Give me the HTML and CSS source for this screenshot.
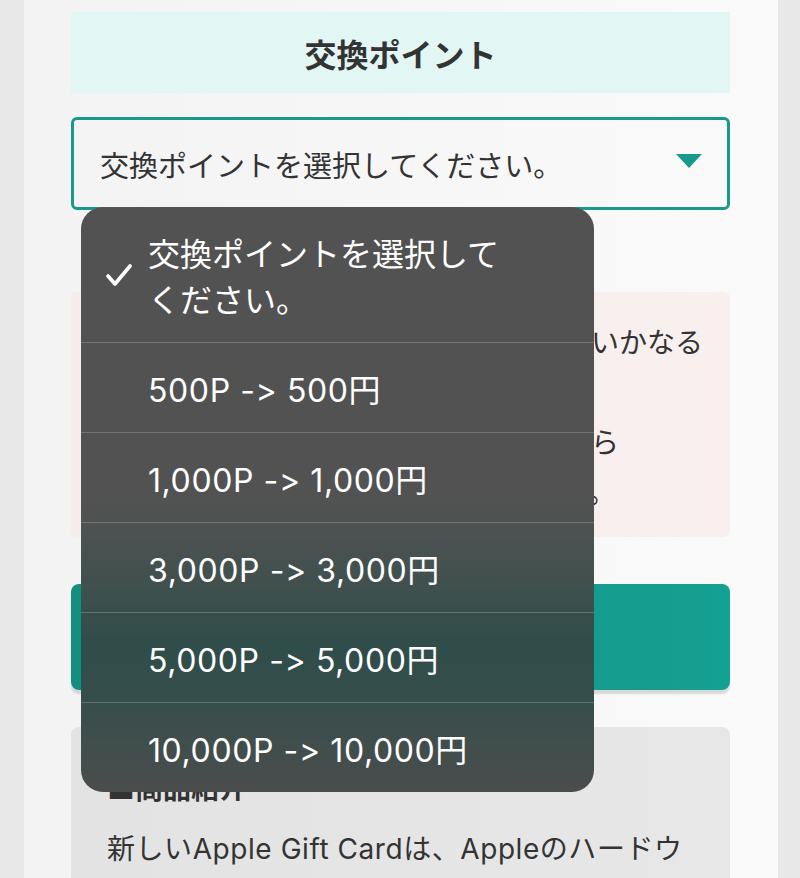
FILE: index.html
```html
<!DOCTYPE html>
<html lang="ja">
<head>
    <meta charset="UTF-8">
    <title>交換ポイント</title>
    <link rel="stylesheet" href="styles.css">
</head>
<body>
<div class="page">
    <!-- 타이틀 -->
    <div class="ttl">
        <h2>交換ポイント</h2>
    </div>

    <!-- 셀렉트 박스 + 열린 목록 -->
    <div class="sel-wrap">
        <div class="sel">
            <span>交換ポイントを選択してください。</span>
            <i class="sel-arrow"></i>
        </div>

        <ul class="picker">
            <li class="picker-item first">
                <svg class="check" width="26" height="22" viewBox="0 0 26 22">
                    <polyline points="2,12 9,20 24,2" fill="none" stroke="#fff" stroke-width="3.6" stroke-linecap="round" stroke-linejoin="round"/>
                </svg>
                <span class="first-txt">交換ポイントを選択してください。</span>
            </li>
            <li class="picker-item">500P -&gt; 500円</li>
            <li class="picker-item">1,000P -&gt; 1,000円</li>
            <li class="picker-item">3,000P -&gt; 3,000円</li>
            <li class="picker-item">5,000P -&gt; 5,000円</li>
            <li class="picker-item">10,000P -&gt; 10,000円</li>
        </ul>
    </div>

    <!-- 주의사항 -->
    <div class="notice">
        ※ポイント交換申請後のキャンセルはいかなる<br>
        理由でも受け付けておりません。<br>
        ギフトコードは交換完了後のメールから<br>
        またはマイページでもご確認できます。
    </div>

    <!-- 교환 버튼 -->
    <button class="btn-exch" type="button">交換する</button>

    <!-- 상품소개 -->
    <div class="info">
        <h3>■商品紹介</h3>
        <p>新しいApple Gift Cardは、Appleのハードウェア、アクセサリ、アプリ、ゲーム、音楽などに使えます。</p>
    </div>
</div>
</body>
</html>
```

FILE: styles.css
```css
*{
    margin: 0;
    padding: 0;
    box-sizing: border-box;
}
body{
    background-color: #e8e8e8;
    font-family: "Noto Sans CJK JP", sans-serif;
    color: #333;
}
/* 가운데 컬럼 */
.page{
    width: 754px;
    min-height: 878px;
    margin-left: 24px;
    padding: 12px 48px 0 47px;
    background: linear-gradient(to right, #f3f3f3, #fafafa);
    overflow: hidden;
}
/* 타이틀 박스 */
.ttl{
    height: 81px;
    background-color: #e2f6f4;
    display: flex;
    align-items: center;
    justify-content: center;
}
.ttl h2{
    font-size: 32px;
    font-weight: bold;
    color: #333;
}

/* 셀렉트 */
.sel-wrap{
    position: relative;
    margin-top: 24px;
}
.sel{
    height: 93px;
    border: 3px solid #17998b;
    border-radius: 6px;
    padding: 0 25px 0 26px;
    display: flex;
    align-items: center;
    justify-content: space-between;
    font-size: 29px;
    color: #333;
}
/* 역삼각형 */
.sel-arrow{
    width: 0;
    height: 0;
    border-left: 13px solid transparent;
    border-right: 13px solid transparent;
    border-top: 14px solid #17998b;
    margin-top: -6px;
}

/* 열린 목록(아이폰 피커) */
.picker{
    position: absolute;
    top: 90px;
    left: 10px;
    width: 513px;
    z-index: 10;
    list-style: none;
    border-radius: 22px;
    overflow: hidden;
    background: linear-gradient(to bottom,
        #525252 0,
        #525252 290px,
        #4b5251 330px,
        #3e504d 385px,
        #2f4d4a 440px,
        #364e4b 490px,
        #404e4c 535px,
        #4a4d4c 585px);
    font-family: "Inter", "Noto Sans CJK JP", sans-serif;
    font-feature-settings: "calt" 0;
    font-size: 32px;
    color: #fff;
}
.picker-item{
    height: 90px;
    padding-left: 67px;
    display: flex;
    align-items: center;
    border-top: 1px solid rgba(255,255,255,0.2);
    letter-spacing: 0.6px;
}
.picker-item.first{
    height: 135px;
    border-top: 0;
    padding-left: 25px;
    line-height: 46px;
    letter-spacing: 0;
    font-family: "Noto Sans CJK JP", sans-serif;
}
.check{
    flex-shrink: 0;
    margin-right: 16px;
}
.first-txt{
    width: 370px;
}

/* 주의사항 박스 */
.notice{
    margin-top: 82px;
    background: linear-gradient(to right, #f6ecea, #f8f0ef);
    border-radius: 6px;
    padding: 24px 20px 21px 44px;
    font-size: 28px;
    line-height: 50px;
    color: #333;
    white-space: nowrap;
}

/* 교환 버튼 */
.btn-exch{
    display: block;
    width: 100%;
    height: 106px;
    margin-top: 47px;
    border: 0;
    border-radius: 8px;
    background: linear-gradient(to right, #138f81, #14a092);
    box-shadow: 0 4px 2px rgba(0,0,0,0.13);
    color: #fff;
    font-family: "Noto Sans CJK JP", sans-serif;
    font-size: 30px;
    font-weight: bold;
}

/* 상품소개 */
.info{
    margin-top: 37px;
    background: linear-gradient(to right, #e3e3e3, #e7e7e7);
    border-radius: 8px;
    padding: 35px 30px 30px 36px;
}
.info h3{
    font-size: 28px;
    font-weight: bold;
    line-height: 50px;
}
.info p{
    margin-top: 12px;
    font-family: "Inter", "Noto Sans CJK JP", sans-serif;
    font-feature-settings: "calt" 0;
    font-size: 28px;
    line-height: 50px;
    letter-spacing: 0.02em;
}
```
